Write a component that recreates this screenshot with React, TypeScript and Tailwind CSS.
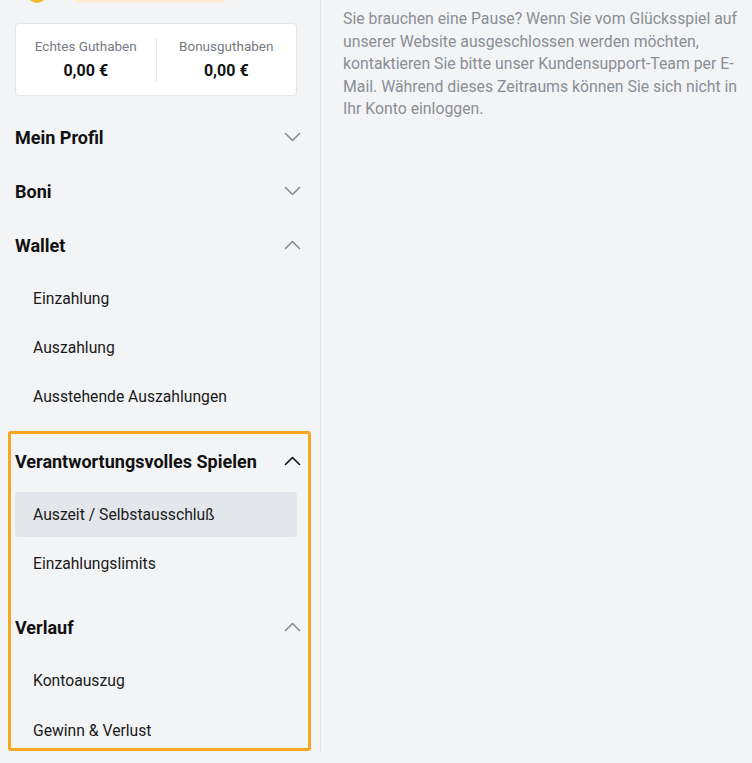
import React from 'react';

const font = { fontFamily: 'Roboto, "Liberation Sans", sans-serif' };

function Chevron({ up, dark }: { up?: boolean; dark?: boolean }) {
  return (
    <svg width="17" height="10" viewBox="0 0 17 10" fill="none" className={dark ? 'text-[#111]' : 'text-[#8b8b8b]'}>
      <polyline points={up ? '1.5,8.5 8.5,1.5 15.5,8.5' : '1.5,1.5 8.5,8.5 15.5,1.5'} stroke="currentColor" strokeWidth="1.6" strokeLinecap="round" strokeLinejoin="round" />
    </svg>
  );
}

function Heading({ title, open, dark }: { title: string; open?: boolean; dark?: boolean }) {
  return (
    <div className="h-[54px] flex items-center justify-between -mr-[4px]">
      <span className="text-[18px] font-bold text-[#111]">{title}</span>
      <Chevron up={open} dark={dark} />
    </div>
  );
}

function SubItem({ label, active }: { label: string; active?: boolean }) {
  return (
    <div className={'h-[45px] flex items-center pl-[18px] text-[15.7px] text-[#1a1a1a] rounded-sm ' + (active ? 'bg-[#e3e6ea]' : '')}>
      {label}
    </div>
  );
}

export default function App() {
  return (
    <div className="min-h-[763px] bg-[#f3f4f6] flex overflow-hidden" style={font}>
      <aside className="w-[321px] shrink-0 border-r border-[#e2e4e8] h-[752px] pl-[15px] pr-[23px]">
        <div className="-mt-[37px] h-[40px] flex items-center gap-[26px] pl-[12px]">
          <div className="w-[20px] h-[40px] rounded-full bg-[#f4b731]" />
          <div className="w-[154px] h-[30px] rounded-md bg-[#fbeed3] mt-[10px]" />
        </div>

        <div className="mt-[20px] h-[73px] bg-white border border-[#e4e6ea] rounded flex items-center">
          <div className="flex-1 flex flex-col items-center">
            <span className="text-[13.5px] text-[#777b82]">Echtes Guthaben</span>
            <span className="text-[16px] font-bold text-[#111] mt-[2px]">0,00 €</span>
          </div>
          <div className="w-px h-[44px] bg-[#e4e6ea]" />
          <div className="flex-1 flex flex-col items-center">
            <span className="text-[13.5px] text-[#777b82]">Bonusguthaben</span>
            <span className="text-[16px] font-bold text-[#111] mt-[2px]">0,00 €</span>
          </div>
        </div>

        <div className="mt-[14px]">
          <Heading title="Mein Profil" />
          <Heading title="Boni" />
          <Heading title="Wallet" open />
          <div className="flex flex-col gap-[4px] pt-[4px] pb-[12px]">
            <SubItem label="Einzahlung" />
            <SubItem label="Auszahlung" />
            <SubItem label="Ausstehende Auszahlungen" />
          </div>

          <div className="relative pt-[3px]">
            <Heading title="Verantwortungsvolles Spielen" open dark />
            <div className="flex flex-col gap-[4px] pt-[4px] pb-[14px]">
              <SubItem label="Auszeit / Selbstausschluß" active />
              <SubItem label="Einzahlungslimits" />
            </div>
            <Heading title="Verlauf" open />
            <div className="flex flex-col gap-[5px] pt-[4px]">
              <SubItem label="Kontoauszug" />
              <SubItem label="Gewinn & Verlust" />
            </div>
            <div className="pointer-events-none absolute -left-[7px] -right-[14px] top-0 h-[320px] border-[3px] border-[#f5a623] rounded-[3px]" />
          </div>
        </div>
      </aside>

      <main className="flex-1 pl-[22px] pr-[8px] pt-[8px]">
        <p className="text-[15.8px] leading-[22.5px] text-[#8a8e95]">
          Sie brauchen eine Pause? Wenn Sie vom Glücksspiel auf unserer Website ausgeschlossen werden möchten, kontaktieren Sie bitte unser Kundensupport-Team per E-Mail. Während dieses Zeitraums können Sie sich nicht in Ihr Konto einloggen.
        </p>
      </main>
    </div>
  );
}
